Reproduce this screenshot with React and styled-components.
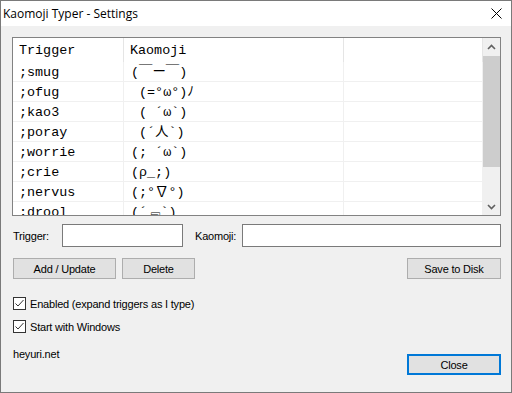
import styled, { createGlobalStyle } from "styled-components";

const Global = createGlobalStyle`
  html, body {
    margin: 0;
    padding: 0;
    background: #ffffff;
  }
  * {
    box-sizing: border-box;
  }
`;

const uiFont = `"Liberation Sans", Arial, sans-serif`;

const Window = styled.div`
  width: 512px;
  height: 393px;
  display: flex;
  flex-direction: column;
  border: 1px solid #7a7a7a;
  background: #f0f0f0;
  font-family: ${uiFont};
  font-size: 11px;
  letter-spacing: -0.2px;
  color: #000;
`;

const TitleBar = styled.div`
  height: 25px;
  flex: none;
  display: flex;
  align-items: center;
  justify-content: space-between;
  background: #ffffff;
  padding: 0 9px 0 2px;
`;

const Title = styled.span`
  font-family: "Open Sans", "Noto Sans", sans-serif;
  font-size: 12px;
  letter-spacing: 0;
  color: #000;
`;

const Body = styled.div`
  flex: 1;
  display: flex;
  flex-direction: column;
  padding: 11px 10px 0 11px;
`;

const ListBox = styled.div`
  height: 179px;
  display: flex;
  border: 1px solid #828282;
  background: #ffffff;
  overflow: hidden;
`;

const ListContent = styled.div`
  flex: 1;
  display: flex;
  flex-direction: column;
  overflow: hidden;
  font-family: "Liberation Mono", "Noto Sans CJK JP", monospace;
  font-size: 13.4px;
  letter-spacing: 0;
`;

const Row = styled.div`
  flex: none;
  display: grid;
  grid-template-columns: 111px 220px 1fr;
  height: ${(p) => (p.$header ? 24 : 20)}px;
  border-bottom: ${(p) => (p.$header ? "none" : "1px solid #f0f0f0")};
`;

const Cell = styled.div`
  padding-left: ${(p) => p.$pad || 6}px;
  padding-top: ${(p) => (p.$header ? 3 : 1)}px;
  line-height: 19px;
  white-space: pre;
  overflow: hidden;
  border-right: 1px solid ${(p) => (p.$header ? "#e5e5e5" : "#f0f0f0")};
`;

const ScrollBar = styled.div`
  width: 17px;
  flex: none;
  display: flex;
  flex-direction: column;
  background: #f0f0f0;
`;

const ArrowBox = styled.div`
  height: 17px;
  flex: none;
  display: flex;
  align-items: center;
  justify-content: center;
`;

const Track = styled.div`
  flex: 1;
  display: flex;
  flex-direction: column;
  padding-top: 1px;
`;

const Thumb = styled.div`
  height: 111px;
  background: #cdcdcd;
`;

const FieldRow = styled.div`
  display: flex;
  align-items: center;
  margin-top: 8px;
  height: 23px;
`;

const Label = styled.label`
  width: ${(p) => p.$w}px;
  flex: none;
  padding-left: 1px;
`;

const TextBox = styled.input`
  height: 23px;
  width: ${(p) => (p.$w ? `${p.$w}px` : "auto")};
  flex: ${(p) => (p.$w ? "none" : "1")};
  min-width: 0;
  border: 1px solid #7a7a7a;
  background: #fff;
  margin-right: ${(p) => p.$mr || 0}px;
  outline: none;
  font: inherit;
`;

const ButtonRow = styled.div`
  display: flex;
  align-items: center;
  gap: 6px;
  margin-top: 11px;
  padding-left: 1px;
`;

const Button = styled.button`
  width: ${(p) => p.$w}px;
  height: 21px;
  margin-left: ${(p) => (p.$push ? "auto" : "0")};
  margin-top: ${(p) => p.$mt || 0}px;
  background: #e1e1e1;
  border: ${(p) => (p.$default ? "2px solid #0078d7" : "1px solid #adadad")};
  font-family: ${uiFont};
  font-size: 11px;
  letter-spacing: -0.2px;
  color: #000;
  padding: 0;
`;

const Checks = styled.div`
  display: flex;
  flex-direction: column;
  gap: 10px;
  margin-top: 18px;
  padding-left: 1px;
`;

const CheckRow = styled.label`
  display: flex;
  align-items: center;
  gap: 4px;
  height: 13px;
`;

const Box = styled.span`
  width: 13px;
  height: 13px;
  flex: none;
  border: 1px solid #333;
  background: #fff;
  display: flex;
  align-items: center;
  justify-content: center;
`;

const Footer = styled.div`
  display: flex;
  align-items: flex-start;
  justify-content: space-between;
  margin-top: 14px;
  padding-left: 1px;
`;

const Link = styled.span`
  line-height: 14px;
`;

const rows = [
  [";smug", "(￣ー￣)"],
  [";ofug", " (=°ω°)ﾉ"],
  [";kao3", " ( ´ω`)"],
  [";poray", " (´人`)"],
  [";worrie", "(; ´ω`)"],
  [";crie", "(ρ_;)"],
  [";nervus", "(;°∇°)"],
  [";drool", "(´﹃`)"],
];

function Chevron({ up }) {
  return (
    <svg width="9" height="6" viewBox="0 0 9 6">
      <path
        d={up ? "M1 5 L4.5 1.5 L8 5" : "M1 1 L4.5 4.5 L8 1"}
        fill="none"
        stroke="#606060"
        strokeWidth="1.6"
      />
    </svg>
  );
}

function Check({ label }) {
  return (
    <CheckRow>
      <Box>
        <svg width="11" height="11" viewBox="0 0 11 11">
          <path d="M1.5 5.5 L4 8 L9.5 2" fill="none" stroke="#333" strokeWidth="1" />
        </svg>
      </Box>
      {label}
    </CheckRow>
  );
}

export default function App() {
  return (
    <>
      <Global />
      <Window>
        <TitleBar>
          <Title>Kaomoji Typer - Settings</Title>
          <svg width="11" height="11" viewBox="0 0 11 11">
            <path d="M0.5 0.5 L10.5 10.5 M10.5 0.5 L0.5 10.5" stroke="#000" strokeWidth="1" />
          </svg>
        </TitleBar>
        <Body>
          <ListBox>
            <ListContent>
              <Row $header>
                <Cell $header>Trigger</Cell>
                <Cell $header>Kaomoji</Cell>
                <Cell $header />
              </Row>
              {rows.map(([t, k]) => (
                <Row key={t}>
                  <Cell>{t}</Cell>
                  <Cell $pad={7}>{k}</Cell>
                  <Cell />
                </Row>
              ))}
            </ListContent>
            <ScrollBar>
              <ArrowBox>
                <Chevron up />
              </ArrowBox>
              <Track>
                <Thumb />
              </Track>
              <ArrowBox>
                <Chevron />
              </ArrowBox>
            </ScrollBar>
          </ListBox>
          <FieldRow>
            <Label $w={50}>Trigger:</Label>
            <TextBox $w={121} $mr={11} />
            <Label $w={48}>Kaomoji:</Label>
            <TextBox />
          </FieldRow>
          <ButtonRow>
            <Button $w={103}>Add / Update</Button>
            <Button $w={73}>Delete</Button>
            <Button $w={94} $push>
              Save to Disk
            </Button>
          </ButtonRow>
          <Checks>
            <Check label="Enabled (expand triggers as I type)" />
            <Check label="Start with Windows" />
          </Checks>
          <Footer>
            <Link>heyuri.net</Link>
            <Button $w={94} $mt={7} $default>
              Close
            </Button>
          </Footer>
        </Body>
      </Window>
    </>
  );
}
